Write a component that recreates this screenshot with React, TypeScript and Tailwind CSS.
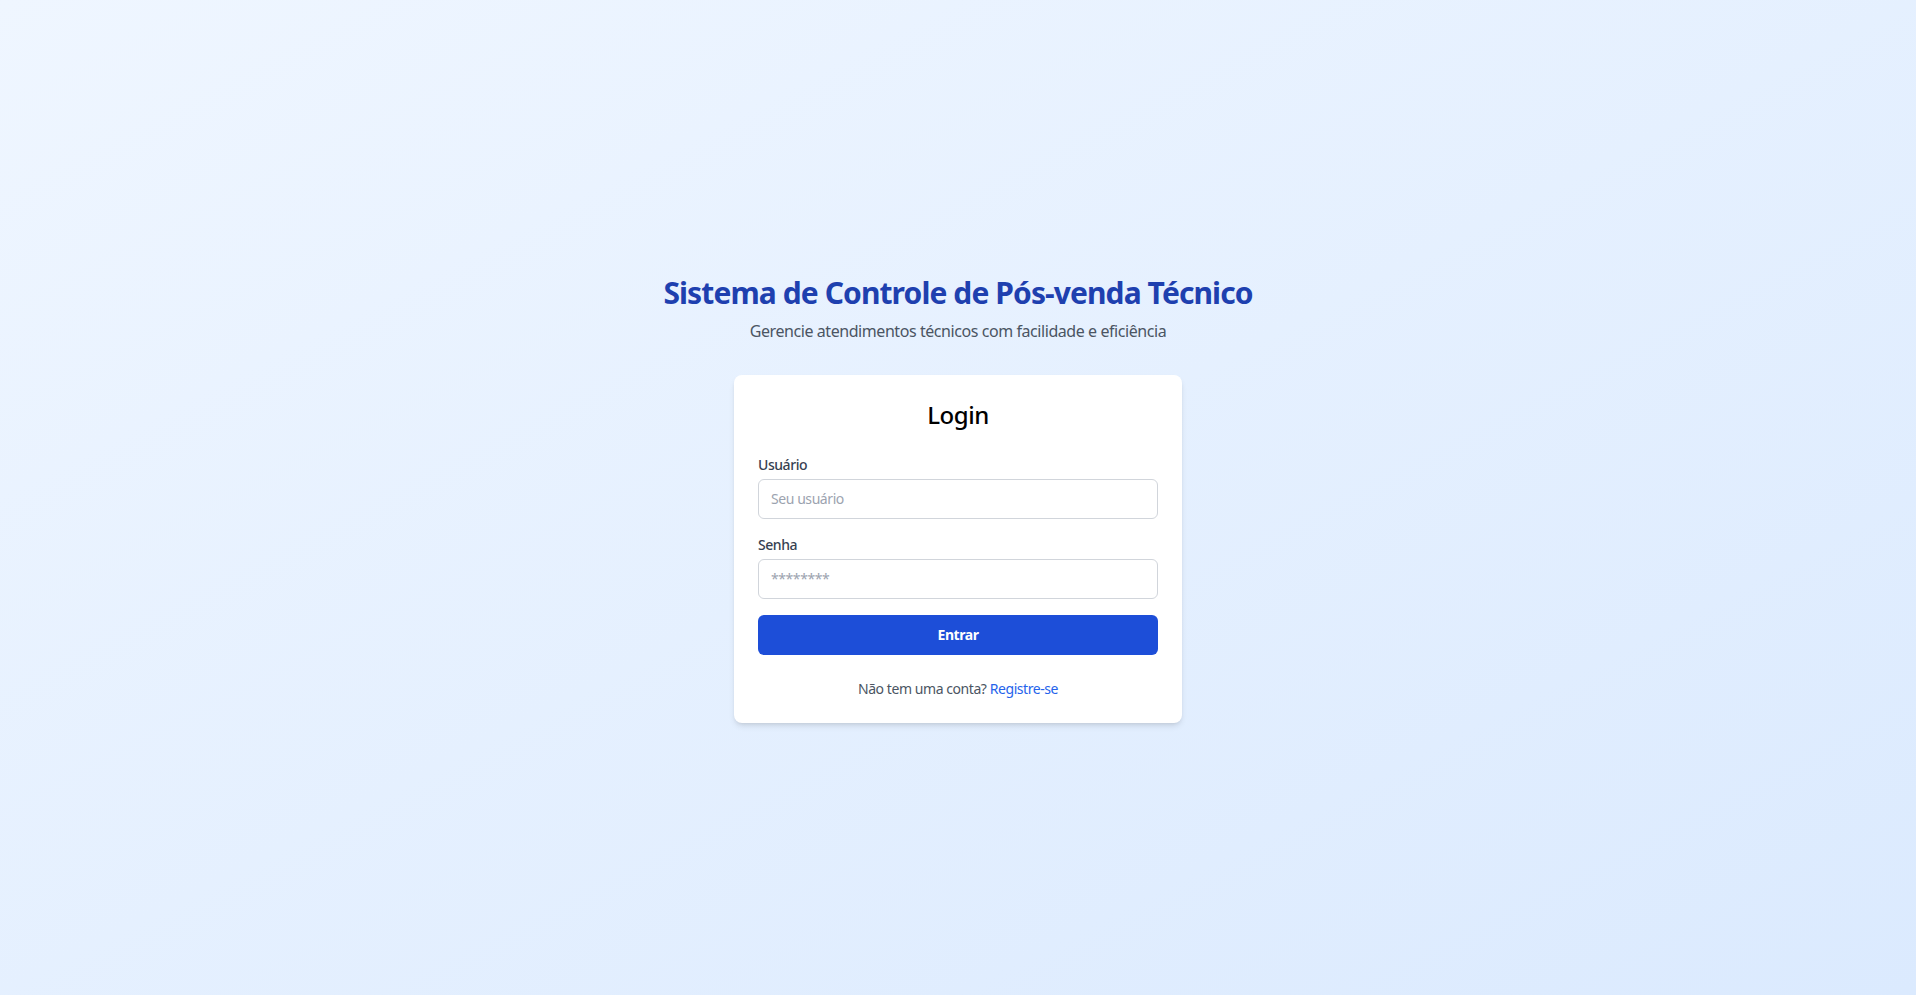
import React from "react";

const LoginPage = () => {
  return (
    <div className="min-h-screen flex items-center justify-center bg-gradient-to-br from-[#eff6ff] to-[#dbeafe] font-['Noto_Sans',sans-serif] tracking-[-0.027em]">
      <div className="w-full max-w-md flex flex-col items-center pt-0.5">
        <div className="text-center mb-8 whitespace-nowrap">
          <h1 className="text-3xl font-bold text-[#1e40af] mb-2 tracking-[-0.03em]">Sistema de Controle de Pós-venda Técnico</h1>
          <p className="text-[#4b5563]">Gerencie atendimentos técnicos com facilidade e eficiência</p>
        </div>
        <div className="w-full bg-white rounded-lg shadow-md p-6">
          <h2 className="text-2xl font-medium text-center mb-6 text-black">Login</h2>
          <form className="space-y-4" onSubmit={(e) => e.preventDefault()}>
            <div>
              <label className="block text-sm font-medium text-[#374151] mb-1">Usuário</label>
              <input
                type="text"
                placeholder="Seu usuário"
                className="w-full h-10 px-3 text-sm border border-[#d1d5db] rounded-md placeholder:text-[#9ca3af] outline-none"
              />
            </div>
            <div>
              <label className="block text-sm font-medium text-[#374151] mb-1">Senha</label>
              <input
                type="password"
                placeholder="********"
                className="w-full h-10 px-3 text-sm border border-[#d1d5db] rounded-md placeholder:text-[#9ca3af] outline-none"
              />
            </div>
            <button type="submit" className="w-full h-10 bg-[#1d4ed8] text-white text-sm font-bold rounded-md">
              Entrar
            </button>
          </form>
          <p className="mt-6 text-center text-sm text-[#4b5563]">
            Não tem uma conta? <a href="#" className="text-[#2563eb]">Registre-se</a>
          </p>
        </div>
      </div>
    </div>
  );
};

export default LoginPage;
